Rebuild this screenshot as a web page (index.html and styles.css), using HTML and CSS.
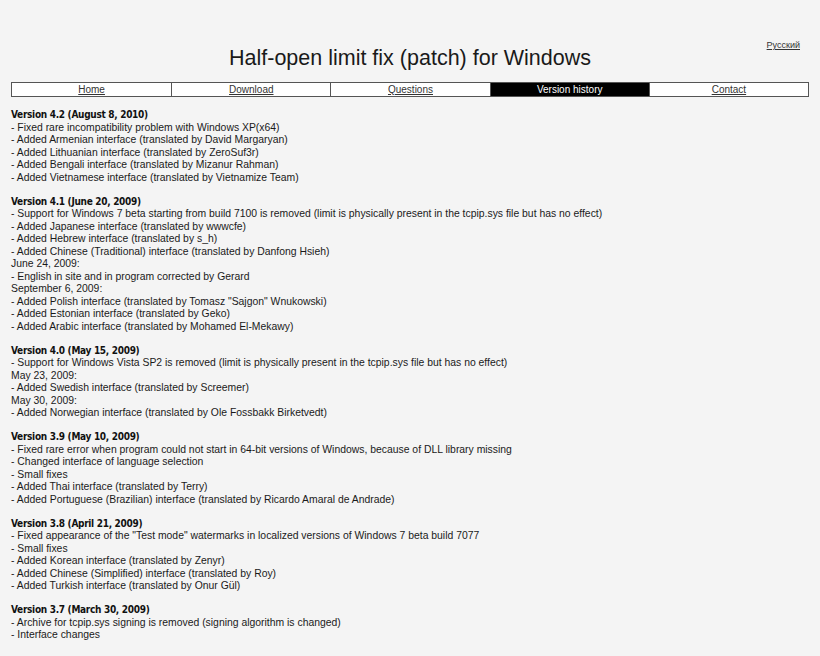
FILE: index.html
```html
<!DOCTYPE html>
<html lang="en">
<head>
<meta charset="utf-8">
<title>Half-open limit fix (patch) for Windows - Version history</title>
<link rel="stylesheet" href="styles.css">
</head>
<body>
<div class="page">
  <header class="header">
    <h1 class="title">Half-open limit fix (patch) for Windows</h1>
    <a class="lang" href="#">Русский</a>
  </header>
  <nav class="menu">
    <a class="item" href="#">Home</a>
    <a class="item" href="#">Download</a>
    <a class="item" href="#">Questions</a>
    <span class="item active">Version history</span>
    <a class="item" href="#">Contact</a>
  </nav>
  <main class="content">
    <section class="ver">
      <h2 class="vh">Version 4.2 (August 8, 2010)</h2>
      <p>- Fixed rare incompatibility problem with Windows XP(x64)</p>
      <p>- Added Armenian interface (translated by David Margaryan)</p>
      <p>- Added Lithuanian interface (translated by ZeroSuf3r)</p>
      <p>- Added Bengali interface (translated by Mizanur Rahman)</p>
      <p>- Added Vietnamese interface (translated by Vietnamize Team)</p>
    </section>
    <section class="ver">
      <h2 class="vh">Version 4.1 (June 20, 2009)</h2>
      <p>- Support for Windows 7 beta starting from build 7100 is removed (limit is physically present in the tcpip.sys file but has no effect)</p>
      <p>- Added Japanese interface (translated by wwwcfe)</p>
      <p>- Added Hebrew interface (translated by s_h)</p>
      <p>- Added Chinese (Traditional) interface (translated by Danfong Hsieh)</p>
      <p>June 24, 2009:</p>
      <p>- English in site and in program corrected by Gerard</p>
      <p>September 6, 2009:</p>
      <p>- Added Polish interface (translated by Tomasz "Sajgon" Wnukowski)</p>
      <p>- Added Estonian interface (translated by Geko)</p>
      <p>- Added Arabic interface (translated by Mohamed El-Mekawy)</p>
    </section>
    <section class="ver">
      <h2 class="vh">Version 4.0 (May 15, 2009)</h2>
      <p>- Support for Windows Vista SP2 is removed (limit is physically present in the tcpip.sys file but has no effect)</p>
      <p>May 23, 2009:</p>
      <p>- Added Swedish interface (translated by Screemer)</p>
      <p>May 30, 2009:</p>
      <p>- Added Norwegian interface (translated by Ole Fossbakk Birketvedt)</p>
    </section>
    <section class="ver">
      <h2 class="vh">Version 3.9 (May 10, 2009)</h2>
      <p>- Fixed rare error when program could not start in 64-bit versions of Windows, because of DLL library missing</p>
      <p>- Changed interface of language selection</p>
      <p>- Small fixes</p>
      <p>- Added Thai interface (translated by Terry)</p>
      <p>- Added Portuguese (Brazilian) interface (translated by Ricardo Amaral de Andrade)</p>
    </section>
    <section class="ver">
      <h2 class="vh">Version 3.8 (April 21, 2009)</h2>
      <p>- Fixed appearance of the "Test mode" watermarks in localized versions of Windows 7 beta build 7077</p>
      <p>- Small fixes</p>
      <p>- Added Korean interface (translated by Zenyr)</p>
      <p>- Added Chinese (Simplified) interface (translated by Roy)</p>
      <p>- Added Turkish interface (translated by Onur Gül)</p>
    </section>
    <section class="ver">
      <h2 class="vh">Version 3.7 (March 30, 2009)</h2>
      <p>- Archive for tcpip.sys signing is removed (signing algorithm is changed)</p>
      <p>- Interface changes</p>
    </section>
  </main>
</div>
</body>
</html>
```
FILE: styles.css
```css
html, body {
  margin: 0;
  padding: 0;
  background: #f4f4f4;
}
body {
  font-family: "Liberation Sans", Arial, sans-serif;
  color: #1a1a1a;
}
.page {
  padding: 0 11px 0 11px;
}
.header {
  position: relative;
  height: 82px;
  display: flex;
  align-items: flex-end;
  justify-content: center;
}
.title {
  margin: 0 0 11px 0;
  font-weight: normal;
  font-size: 21.5px;
  line-height: 26px;
  color: #1a1a1a;
}
.lang {
  position: absolute;
  right: 9px;
  top: 40px;
  font-size: 9px;
  color: #333;
}
.menu {
  display: grid;
  grid-template-columns: repeat(5, 1fr);
  border: 1px solid #555;
  background: #fff;
}
.item {
  font-size: 10px;
  line-height: 13px;
  text-align: center;
  color: #333;
  border-left: 1px solid #555;
}
.item:first-child {
  border-left: none;
}
.active {
  background: #000;
  color: #fff;
}
.content {
  padding-top: 11px;
  font-size: 10.4px;
  line-height: 12.5px;
}
.ver {
  margin: 0 0 10.5px 0;
}
.vh {
  margin: 0;
  font-size: 10px;
  letter-spacing: -0.3px;
  line-height: 13.5px;
  font-weight: bold;
  font-family: "DejaVu Sans Condensed", "DejaVu Sans", sans-serif;
  color: #111;
}
.ver p {
  margin: 0;
}
```
